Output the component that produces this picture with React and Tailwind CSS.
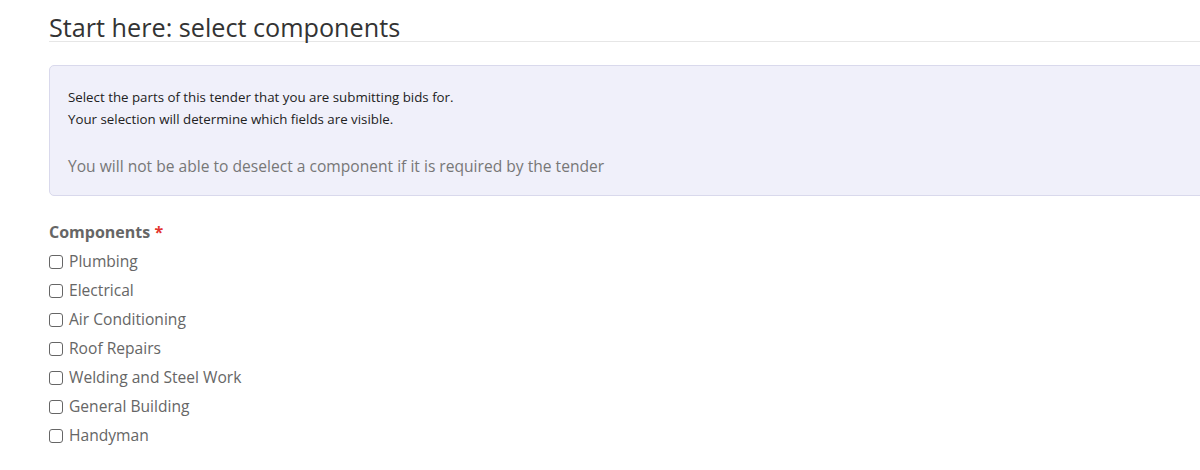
import React from 'react';

const components = [
    'Plumbing',
    'Electrical',
    'Air Conditioning',
    'Roof Repairs',
    'Welding and Steel Work',
    'General Building',
    'Handyman',
];

export default function App() {
    return (
        <div className="w-[1200px] h-[470px] overflow-hidden bg-white font-['Open_Sans',sans-serif]">
            <div className="w-[1260px] pl-[49px] pt-[14px]">
                {/* Title */}
                <h2 className="text-[25.2px] leading-[27px] text-[#333] border-b border-[#e6e6e6]">
                    Start here: select components
                </h2>

                {/* Info box */}
                <div className="mt-[23px] h-[131px] bg-[#f0f0fa] border border-[#d9d9ec] rounded-[5px] pl-[18px] pt-[20px]">
                    <p className="text-[13.3px] leading-[22px] text-[#222]">
                        Select the parts of this tender that you are submitting bids for.
                    </p>
                    <p className="text-[13.3px] leading-[22px] text-[#222]">
                        Your selection will determine which fields are visible.
                    </p>
                    <p className="mt-[25px] text-[15.6px] leading-[22px] text-[#777]">
                        You will not be able to deselect a component if it is required by the tender
                    </p>
                </div>

                {/* Components */}
                <div className="mt-[25px]">
                    <label className="block text-[16px] leading-[22px] font-bold text-[#666]">
                        Components <span className="text-[#e3342f]">*</span>
                    </label>
                    <div className="mt-[4px] flex flex-col">
                        {components.map((name) => (
                            <label key={name} className="flex items-center h-[29px] text-[15.6px] text-[#666]">
                                <span className="w-[14px] h-[14px] border border-[#666] rounded-[3px] mr-[6px] shrink-0" />
                                {name}
                            </label>
                        ))}
                    </div>
                </div>
            </div>
        </div>
    );
}
